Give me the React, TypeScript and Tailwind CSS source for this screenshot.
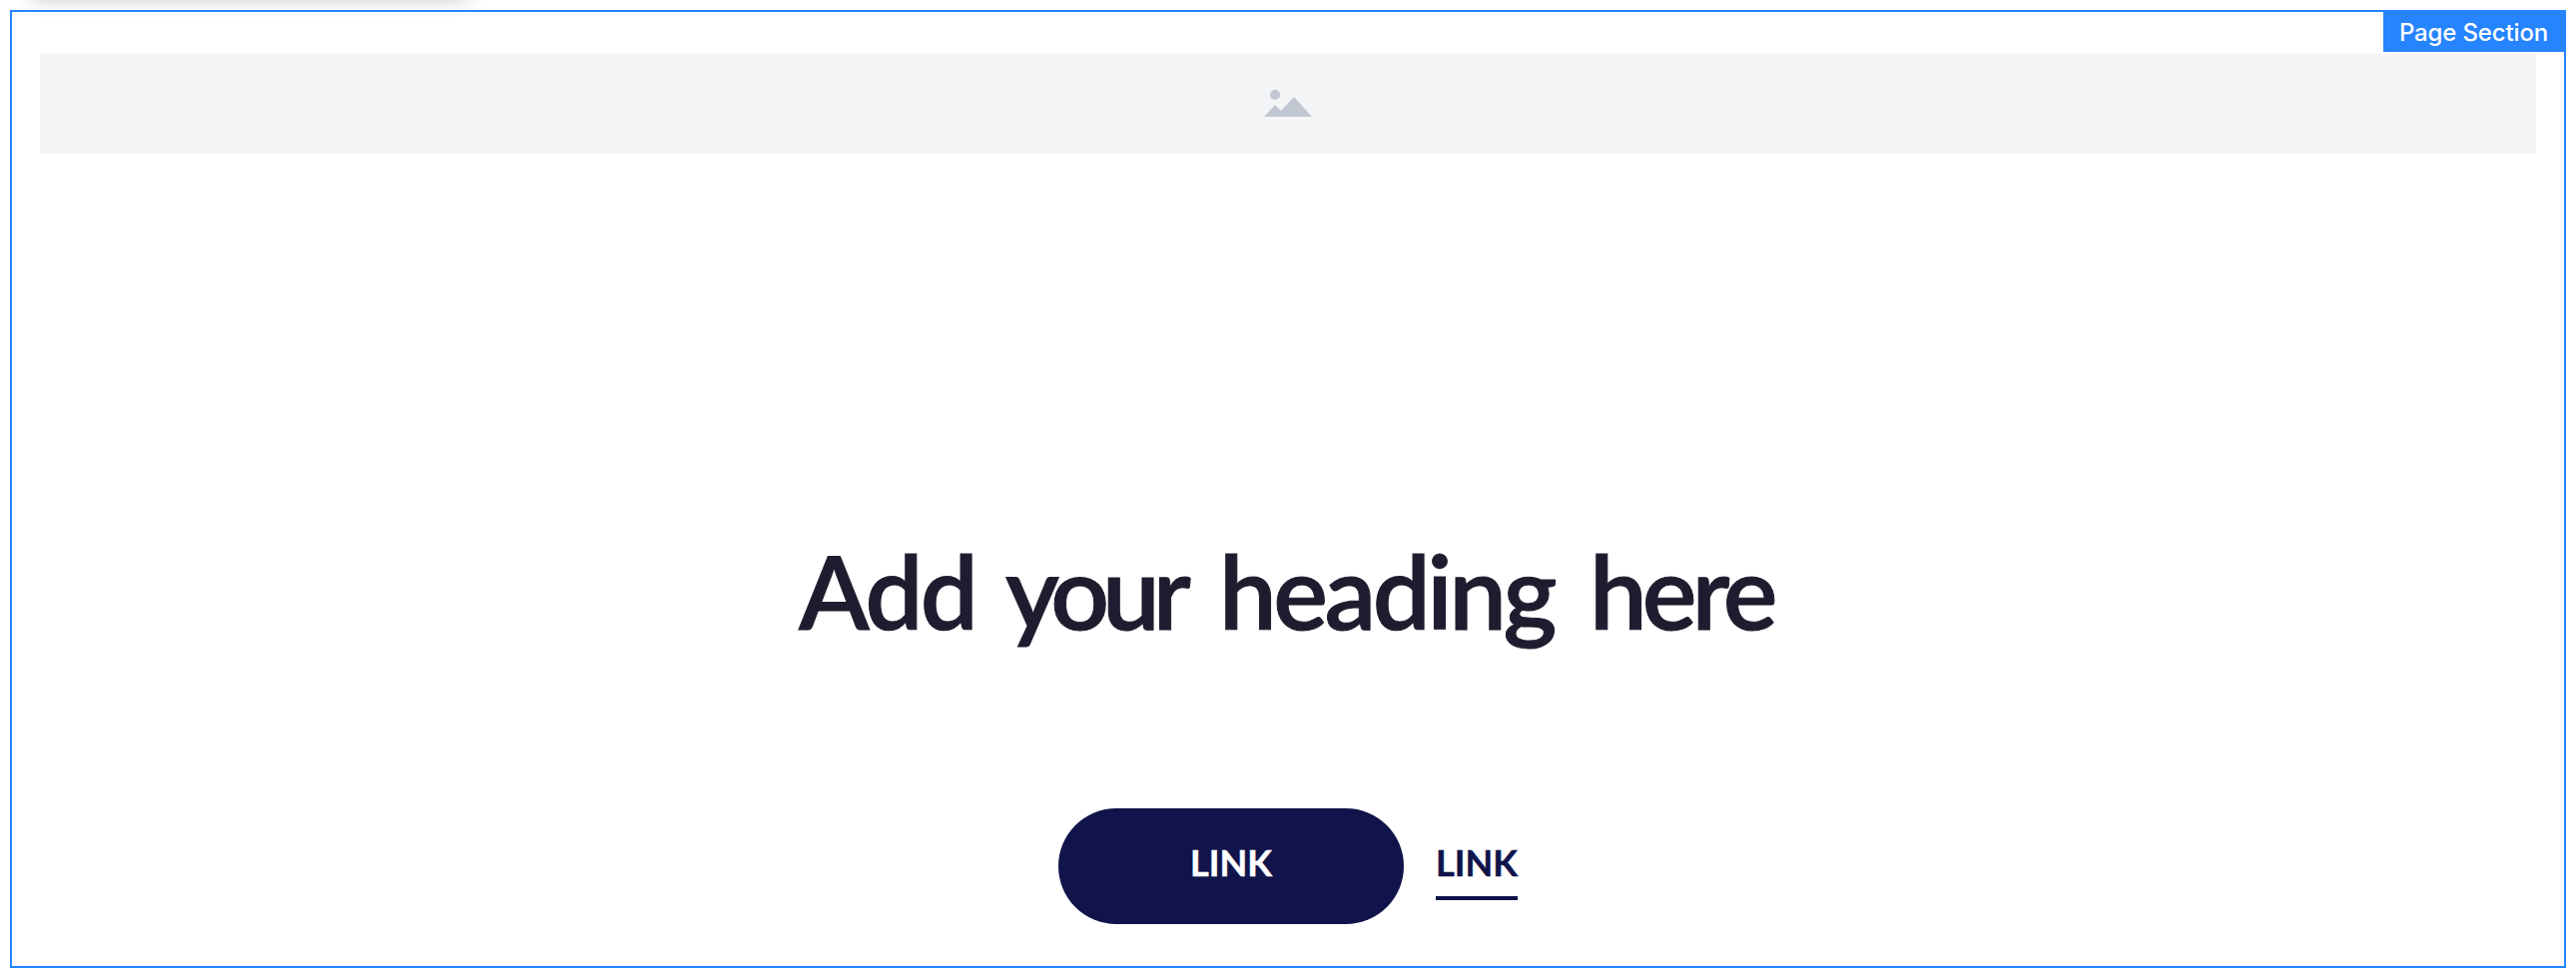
export default function App() {
  return (
    <div className="relative h-[978px] w-[2580px] overflow-hidden bg-white p-[10px] pb-2">
      <div className="absolute -top-20 left-[30px] h-20 w-[440px] rounded-lg shadow-[0_0_18px_rgba(20,20,50,0.22)]" />
      <section className="relative h-[960px] border-2 border-[#2684ff] px-7 pt-[42px]">
        <div className="absolute -top-0.5 -right-0.5 flex h-[42px] w-[183px] items-center justify-center bg-[#2684ff] pt-[3px] pr-0.5 font-['Inter',sans-serif] text-[24px] font-medium tracking-[-0.15px] whitespace-nowrap text-white">
          Page Section
        </div>
        <div className="flex h-[100px] items-center justify-center bg-[#f4f5f7]">
          <svg className="h-[26px] w-12 overflow-visible" viewBox="0 0 48 26" fill="#c1c7d0">
            <circle cx="11" cy="4" r="5" />
            <path d="M0 26 11 14 17 20 30 6 48 26Z" />
          </svg>
        </div>
        <h1 className="mt-[367px] flex h-[140px] items-center justify-center font-['Lato',sans-serif] text-[103px] leading-[140px] font-semibold whitespace-nowrap text-[#1d1d2f] [-webkit-text-stroke:1px_#1d1d2f]">
          <span className="w-[207px] tracking-[-3px]">Add</span>
          <span className="w-[214px] tracking-[-7px]">your</span>
          <span className="w-[371px] tracking-[-3.5px]">heading</span>
          <span className="w-[188px] tracking-[-5px]">here</span>
        </h1>
        <div className="mt-[149px] flex h-[116px] items-start justify-center gap-8 font-['Lato',sans-serif] text-[36px] leading-[44px] font-bold">
          <a className="flex h-[116px] w-[346px] justify-center rounded-full bg-[#10144a] pt-8 text-white [-webkit-text-stroke:0.5px_white]">
            LINK
          </a>
          <a className="flex h-[92px] w-[82px] justify-center pt-8 text-[#10144a] shadow-[inset_0_-4px_0_#10144a] [-webkit-text-stroke:0.5px_#10144a]">
            LINK
          </a>
        </div>
      </section>
    </div>
  );
}
